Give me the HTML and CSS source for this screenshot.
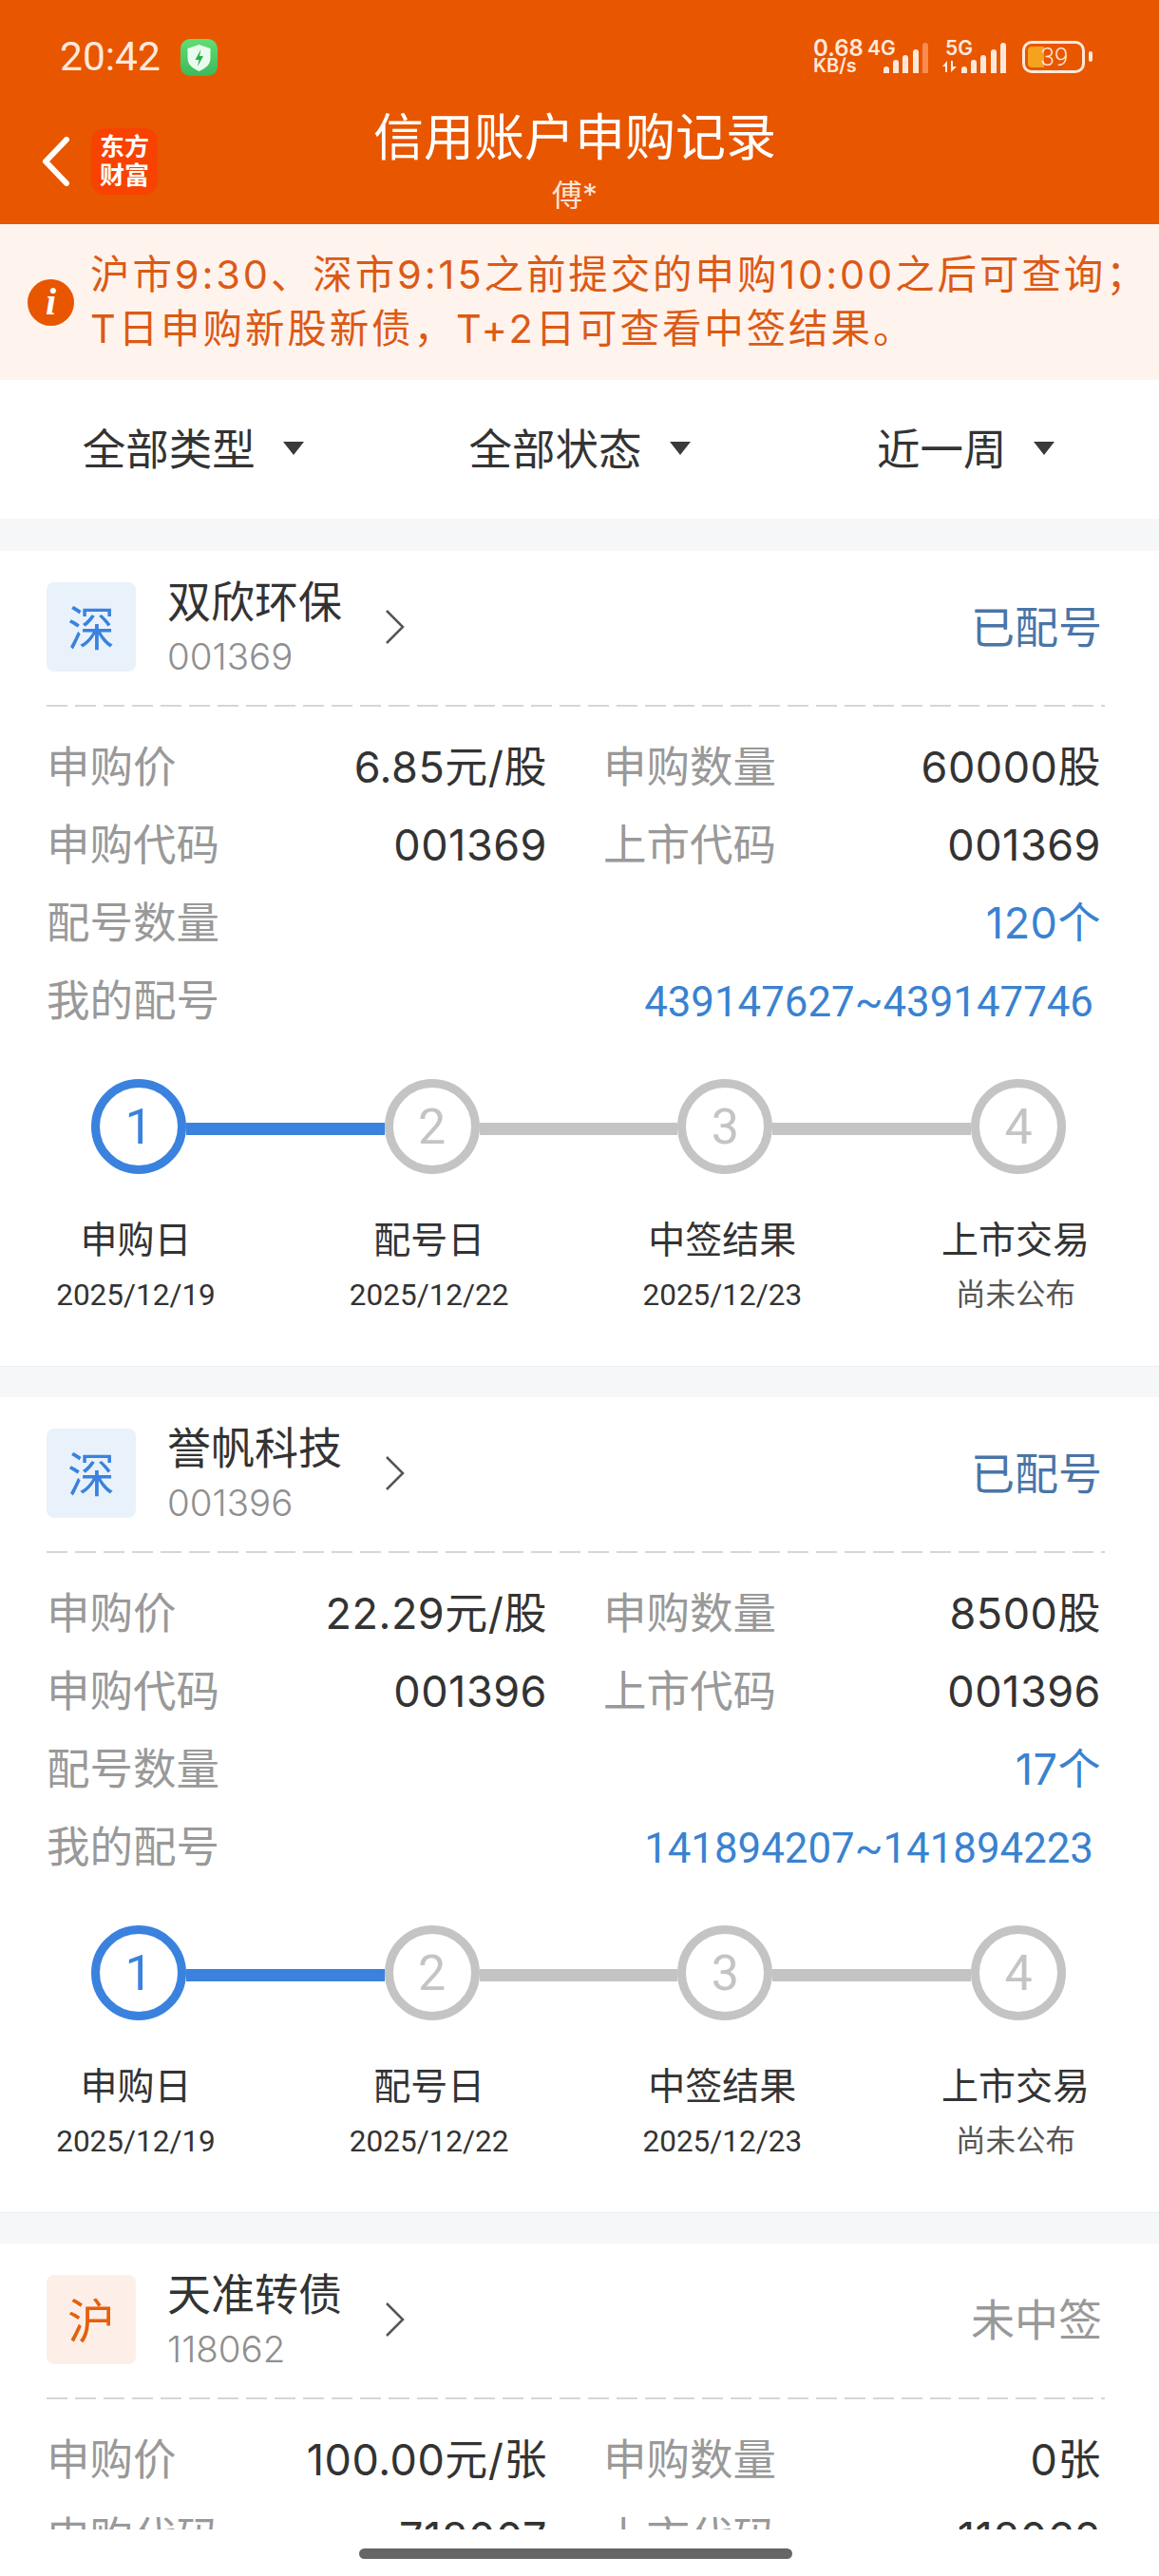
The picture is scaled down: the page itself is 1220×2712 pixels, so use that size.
FILE: index.html
```html
<!DOCTYPE html>
<html lang="zh-CN">
<head>
<meta charset="utf-8">
<title>信用账户申购记录</title>
<link rel="stylesheet" href="styles.css">
</head>
<body>
<div class="page">
  <header class="topbar">
    <div class="status">
      <div class="status-left">
        <span class="clock">20:42</span>
        <svg class="shield-app" viewBox="0 0 39 39">
          <defs><linearGradient id="appgreen" x1="0" y1="0" x2="0" y2="1"><stop offset="0" stop-color="#62dd74"/><stop offset="1" stop-color="#3cb95a"/></linearGradient></defs>
          <rect width="39" height="39" rx="10" fill="url(#appgreen)"/>
          <path d="M19.5 6l12 4v10c0 7-5 11-12 14-7-3-12-7-12-14V10z" fill="#e9fbee"/>
          <path d="M21.5 11l-6 11h4l-1.500 7 6-11h-4z" fill="#2fae4c"/>
        </svg>
      </div>
      <div class="status-right">
        <span class="speed"><b>0.68</b><b>KB/s</b></span>
        <span class="net"><b>4G</b></span>
        <svg class="bars bars-a" viewBox="0 0 48 32"><path d="M0 32v-4a3 3 0 0 1 6 0v4zM10 32V21a3 3 0 0 1 6 0v11zM20 32V16a3 3 0 0 1 6 0v16zM31 32V10a3 3 0 0 1 6 0v22z" fill="#fde9dc"/><path d="M41 32V3a3 3 0 0 1 6 0v29z" fill="#f98a50"/></svg>
        <span class="net net-five"><b>5G</b><svg class="arrows" viewBox="0 0 16 12"><path d="M5 0v12H3V6H0zM9 12V0h2v6h4z" fill="#fde9dc"/></svg></span>
        <svg class="bars bars-b" viewBox="0 0 48 32"><path d="M0 32v-4a3 3 0 0 1 6 0v4zM10 32V21a3 3 0 0 1 6 0v11zM20 32V16a3 3 0 0 1 6 0v16zM31 32V10a3 3 0 0 1 6 0v22zM41 32V3a3 3 0 0 1 6 0v29z" fill="#fde9dc"/></svg>
        <span class="battery"><span class="battery-fill"></span><span class="battery-num">39</span></span>
        <span class="battery-nub"></span>
      </div>
    </div>
    <div class="navbar">
      <svg class="back" viewBox="0 0 30 52"><path d="M26 3L4 26l22 23" fill="none" stroke="#fff" stroke-width="6" stroke-linecap="round" stroke-linejoin="round"/></svg>
      <div class="brand"><span>东方</span><span>财富</span></div>
      <div class="titles">
        <h1>信用账户申购记录</h1>
        <p>傅*</p>
      </div>
    </div>
  </header>

  <section class="notice">
    <span class="notice-icon">i</span>
    <div class="notice-text">
      <p>沪市9:30、深市9:15之前提交的申购10:00之后可查询；</p>
      <p>T日申购新股新债，T+2日可查看中签结果。</p>
    </div>
  </section>

  <nav class="filters">
    <div class="filter"><span>全部类型</span><i class="caret"></i></div>
    <div class="filter"><span>全部状态</span><i class="caret"></i></div>
    <div class="filter"><span>近一周</span><i class="caret"></i></div>
  </nav>

  <main class="list">
    <article class="card">
      <div class="card-head">
        <span class="market sz">深</span>
        <div class="stock"><span class="stock-name">双欣环保</span><span class="stock-code">001369</span></div>
        <svg class="more" viewBox="0 0 22 38"><path d="M2 2l17 17L2 36" fill="none" stroke="#555" stroke-width="2.500"/></svg>
        <span class="state matched">已配号</span>
      </div>
      <div class="facts">
        <div class="fact"><span class="label">申购价</span><span class="value">6.85元/股</span></div>
        <div class="fact"><span class="label">申购数量</span><span class="value">60000股</span></div>
        <div class="fact"><span class="label">申购代码</span><span class="value">001369</span></div>
        <div class="fact"><span class="label">上市代码</span><span class="value">001369</span></div>
        <div class="fact wide"><span class="label">配号数量</span><span class="value link">120个</span></div>
        <div class="fact wide"><span class="label">我的配号</span><span class="value link inset">439147627~439147746</span></div>
      </div>
      <div class="track">
        <span class="dot on">1</span><span class="bar on"></span>
        <span class="dot">2</span><span class="bar"></span>
        <span class="dot">3</span><span class="bar"></span>
        <span class="dot">4</span>
      </div>
      <div class="steps">
        <div class="step"><span class="step-name">申购日</span><span class="step-date">2025/12/19</span></div>
        <div class="step"><span class="step-name">配号日</span><span class="step-date">2025/12/22</span></div>
        <div class="step"><span class="step-name">中签结果</span><span class="step-date">2025/12/23</span></div>
        <div class="step"><span class="step-name">上市交易</span><span class="step-date muted">尚未公布</span></div>
      </div>
    </article>

    <article class="card">
      <div class="card-head">
        <span class="market sz">深</span>
        <div class="stock"><span class="stock-name">誉帆科技</span><span class="stock-code">001396</span></div>
        <svg class="more" viewBox="0 0 22 38"><path d="M2 2l17 17L2 36" fill="none" stroke="#555" stroke-width="2.500"/></svg>
        <span class="state matched">已配号</span>
      </div>
      <div class="facts">
        <div class="fact"><span class="label">申购价</span><span class="value">22.29元/股</span></div>
        <div class="fact"><span class="label">申购数量</span><span class="value">8500股</span></div>
        <div class="fact"><span class="label">申购代码</span><span class="value">001396</span></div>
        <div class="fact"><span class="label">上市代码</span><span class="value">001396</span></div>
        <div class="fact wide"><span class="label">配号数量</span><span class="value link">17个</span></div>
        <div class="fact wide"><span class="label">我的配号</span><span class="value link inset">141894207~141894223</span></div>
      </div>
      <div class="track">
        <span class="dot on">1</span><span class="bar on"></span>
        <span class="dot">2</span><span class="bar"></span>
        <span class="dot">3</span><span class="bar"></span>
        <span class="dot">4</span>
      </div>
      <div class="steps">
        <div class="step"><span class="step-name">申购日</span><span class="step-date">2025/12/19</span></div>
        <div class="step"><span class="step-name">配号日</span><span class="step-date">2025/12/22</span></div>
        <div class="step"><span class="step-name">中签结果</span><span class="step-date">2025/12/23</span></div>
        <div class="step"><span class="step-name">上市交易</span><span class="step-date muted">尚未公布</span></div>
      </div>
    </article>

    <article class="card">
      <div class="card-head">
        <span class="market sh">沪</span>
        <div class="stock"><span class="stock-name">天准转债</span><span class="stock-code">118062</span></div>
        <svg class="more" viewBox="0 0 22 38"><path d="M2 2l17 17L2 36" fill="none" stroke="#555" stroke-width="2.500"/></svg>
        <span class="state">未中签</span>
      </div>
      <div class="facts">
        <div class="fact"><span class="label">申购价</span><span class="value">100.00元/张</span></div>
        <div class="fact"><span class="label">申购数量</span><span class="value">0张</span></div>
        <div class="fact"><span class="label">申购代码</span><span class="value">718007</span></div>
        <div class="fact"><span class="label">上市代码</span><span class="value">118062</span></div>
      </div>
    </article>
  </main>

  <div class="home-strip"><span class="home-bar"></span></div>
</div>
</body>
</html>
```
FILE: styles.css
```css
* { box-sizing: border-box; margin: 0; padding: 0; }
html, body { width: 1220px; height: 2712px; overflow: hidden; background: #fff; }
body { font-family: Inter, "Noto Sans CJK SC", sans-serif; color: #333; }

.page { position: relative; width: 1220px; height: 2712px; overflow: hidden; background: #f6f7f9; }

/* orange header */
.topbar { height: 236px; background: #e85600; color: #fff; }
.status { display: flex; justify-content: space-between; height: 110px; padding: 41px 70px 0 63px; color: #fde9dc; }
.status-left { display: flex; align-items: flex-start; gap: 21px; }
.clock { font-family: Roboto, sans-serif; font-size: 42.500px; line-height: 38px; font-weight: 400; }
.shield-app { width: 39px; height: 39px; }
.status-right { display: flex; align-items: flex-start; }
.speed { display: flex; flex-direction: column; width: 57px; font-size: 24px; line-height: 20px; white-space: nowrap; }
.speed b { font-weight: 600; }
.speed b + b { font-size: 20px; line-height: 17px; }
.net { font-size: 21px; line-height: 20px; width: 30px; }
.net b { font-weight: 600; display: block; }
.net-five { width: 17px; }
.bars { flex: none; width: 48px; height: 32px; margin-top: 4px; }
.bars-a { margin-left: -13px; margin-right: 17px; }
.bars-b { margin-right: 16px; }
.arrows { display: block; width: 16px; height: 12px; margin-top: 3px; margin-left: -3px; }
.battery { position: relative; display: block; width: 66px; height: 34px; margin-top: 2px; border: 3px solid #fde9dc; border-radius: 10px; }
.battery-fill { position: absolute; left: 3px; top: 3px; width: 17px; height: 22px; border-radius: 4px 0 0 4px; background: #f5a21f; }
.battery-num { position: absolute; left: 0; right: 0; top: 0; text-align: center; font-family: Roboto, sans-serif; font-size: 26px; line-height: 28px; font-weight: 300; color: #fde9dc; padding-left: 2px; }
.battery-nub { width: 4px; height: 11px; margin-top: 13px; margin-left: 4px; border-radius: 2px; background: #fde9dc; }

.navbar { position: relative; display: flex; align-items: center; height: 126px; padding: 0 0 0 44px; }
.back { width: 30px; height: 52px; margin-top: -6px; }
.brand { display: flex; flex-direction: column; justify-content: center; align-items: center; width: 70px; height: 70px; margin-top: -6px; margin-left: 22px; border-radius: 14px; background: #f84300; color: #fff; font-size: 26px; line-height: 30px; font-weight: 700; }
.titles { position: absolute; left: 0; right: 10px; top: 0; text-align: center; }
.titles h1 { font-size: 53px; line-height: 68px; font-weight: 400; margin-top: 1px; }
.titles p { font-size: 32px; line-height: 42px; margin-top: 6px; color: #fbe3d5; }

/* hint strip */
.notice { display: flex; align-items: center; height: 164px; padding-left: 29px; background: #fff3ee; color: #dc5a14; }
.notice-icon { display: flex; justify-content: center; align-items: center; flex: none; width: 49px; height: 49px; margin-right: 17px; border-radius: 50%; background: #e85600; color: #fff; font-family: "Liberation Serif", serif; font-style: italic; font-weight: 700; font-size: 40px; line-height: 1; }
.notice-text { font-size: 41.500px; line-height: 57px; letter-spacing: 2.900px; white-space: nowrap; }

/* filter row */
.filters { display: flex; height: 146px; background: #fff; }
.filter { flex: 1; display: flex; justify-content: center; align-items: center; gap: 29px; font-size: 45.500px; color: #333; }
.filter span { padding-bottom: 6px; }
.caret { width: 0; height: 0; margin-bottom: 2px; border-left: 11.500px solid transparent; border-right: 11.500px solid transparent; border-top: 14px solid #3a3a3a; }

/* record cards */
.list { display: flex; flex-direction: column; gap: 32px; padding-top: 34px; }
.card { height: 859px; padding: 33px 57px 0 49px; background: #fff; border-bottom: 1px solid #eceef0; }
.card-head { display: flex; align-items: center; height: 94px; }
.market { display: flex; justify-content: center; align-items: center; flex: none; width: 94px; height: 94px; border-radius: 8px; font-size: 50px; padding-bottom: 4px; }
.market.sz { background: #e9f2fb; color: #3a82de; }
.market.sh { background: #fdefe7; color: #e4600f; }
.stock { display: flex; flex-direction: column; gap: 16px; margin-left: 33px; align-self: flex-start; }
.stock-name { font-size: 46px; line-height: 40px; color: #333; }
.stock-code { font-size: 38.500px; line-height: 44px; font-weight: 300; color: #8f8f8f; }
.more { flex: none; width: 22px; height: 38px; margin-left: 45px; }
.state { margin-left: auto; margin-right: 3px; padding-bottom: 6px; font-size: 46px; color: #999; }
.state.matched { color: #4a75a8; }

.facts { display: grid; grid-template-columns: 527px 524px; column-gap: 59px; margin-top: 35px; padding-top: 24.500px; background: repeating-linear-gradient(90deg, #d6d6d6 0 22px, transparent 22px 30px) top left / 100% 2px no-repeat; }
.fact { display: flex; justify-content: space-between; align-items: baseline; height: 82.300px; line-height: 82px; font-size: 45px; }
.fact.wide { grid-column: 1 / 3; }
.label { font-size: 45.500px; color: #999; }
.value { color: #333; letter-spacing: 0.500px; }
.link { color: #3a82d0; }
.inset { margin-right: 8px; font-family: Roboto, "Noto Sans CJK SC", sans-serif; font-size: 43.800px; letter-spacing: 0; }

.track { display: flex; align-items: center; margin: 40.500px 41px 0 47px; }
.dot { display: flex; justify-content: center; align-items: center; flex: none; width: 100px; height: 100px; border: 9px solid #c4c4c4; border-radius: 50%; color: #c4c4c4; font-family: Roboto, sans-serif; font-size: 52px; font-weight: 400; }
.dot.on { border-color: #3a82de; color: #3a82de; }
.bar { flex: 1; height: 13px; margin-top: 5px; background: #c4c4c4; }
.bar.on { background: #3a82de; }

.steps { display: flex; justify-content: space-between; margin: 42px 4px 0 4px; }
.step { display: flex; flex-direction: column; align-items: center; width: 180px; }
.step-name { font-size: 39px; line-height: 54px; color: #333; }
.step-date { font-family: Roboto, "Noto Sans CJK SC", sans-serif; font-size: 31.500px; line-height: 52px; margin-top: 6px; color: #333; white-space: nowrap; }
.step-date.muted { color: #555; }

/* gesture bar */
.home-strip { position: absolute; left: 0; right: 0; bottom: 0; height: 49px; background: #fff; }
.home-bar { position: absolute; left: 378px; top: 20px; width: 456px; height: 11px; border-radius: 6px; background: #666; }
```
